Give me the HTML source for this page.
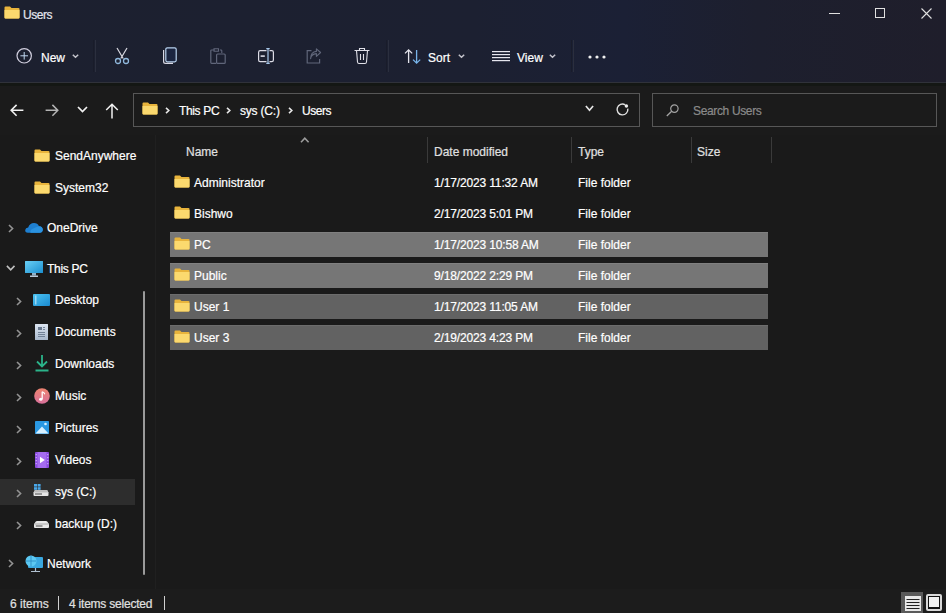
<!DOCTYPE html>
<html><head><meta charset="utf-8">
<style>
*{margin:0;padding:0;box-sizing:border-box}
html,body{width:946px;height:613px;overflow:hidden;background:#1a1a1a;font-family:"Liberation Sans",sans-serif;font-size:12px;color:#fff}
.a{position:absolute}
.t{position:absolute;white-space:nowrap;line-height:14px;transform:scaleY(1.08);transform-origin:0 11px;-webkit-text-stroke:0.2px currentColor}
#top{left:0;top:0;width:946px;height:82px;background:linear-gradient(90deg,#1c202f 0%,#1c2031 50%,#1b2035 66%,#1d1f2e 80%,#1f1e2b 100%)}
#topline{left:0;top:82px;width:946px;height:1px;background:#30323a}
#band{left:0;top:83px;width:946px;height:3px;background:#141714}
#addr{left:0;top:83px;width:946px;height:52px;background:#1b1b1b}
.sep{position:absolute;width:1px;background:#2b2f3e;box-shadow:-2px 0 0 #191c2a}
svg{position:absolute;overflow:visible}
.row{position:absolute;left:170px;width:598px;height:25px}
.sel1{background:#767676;box-shadow:inset 0 1px 0 #808080}
.sel2{background:#626262;box-shadow:inset 0 1px 0 #6c6c6c}
.nav{color:#fff}
</style></head><body>
<!-- title + toolbar -->
<div id="top" class="a"></div>
<div id="topline" class="a"></div>
<div id="addr" class="a"></div>
<div id="band" class="a"></div>

<!-- title folder icon -->
<svg style="left:4px;top:6px" width="16" height="13" viewBox="0 0 16 13">
 <path d="M0.5 1.5 Q0.5 0.5 1.5 0.5 H6 L7.5 2 H14.5 Q15.5 2 15.5 3 V11.5 Q15.5 12.5 14.5 12.5 H1.5 Q0.5 12.5 0.5 11.5Z" fill="#e8b43c"/>
 <path d="M0.5 4 H15.5 V11.5 Q15.5 12.5 14.5 12.5 H1.5 Q0.5 12.5 0.5 11.5Z" fill="#fbd96e"/>
</svg>
<div class="t" style="left:23px;top:7.5px;color:#e4e6ee;letter-spacing:-0.45px">Users</div>

<!-- window controls -->
<div class="a" style="left:829px;top:13px;width:11px;height:1px;background:#e0e0e0"></div>
<div class="a" style="left:875px;top:8px;width:10px;height:10px;border:1px solid #e0e0e0"></div>
<svg style="left:921px;top:8px" width="11" height="11" viewBox="0 0 11 11"><path d="M0.5 0.5 L10.5 10.5 M10.5 0.5 L0.5 10.5" stroke="#e0e0e0" stroke-width="1.1"/></svg>

<!-- toolbar -->
<svg style="left:16px;top:48px" width="16" height="16" viewBox="0 0 16 16"><circle cx="8.2" cy="7.8" r="7.2" fill="none" stroke="#d0cede" stroke-width="1.2"/><path d="M8.2 4 V11.6 M4.4 7.8 H12" stroke="#c0d8f0" stroke-width="1"/></svg>
<div class="t" style="left:41px;top:51px;color:#fff">New</div>
<svg style="left:72px;top:54px" width="7" height="4" viewBox="0 0 7 4"><path d="M0.8 0.8 L3.5 3.3 L6.2 0.8" fill="none" stroke="#c4c4cc" stroke-width="1.5"/></svg>
<div class="sep" style="left:95px;top:40px;height:32px"></div>

<!-- cut -->
<svg style="left:114px;top:48px" width="16" height="16" viewBox="0 0 16 16"><path d="M3 0 L9.2 10.5 M13 0 L6.8 10.5" stroke="#d8d8e0" stroke-width="1.2" fill="none"/><circle cx="4" cy="13" r="2.5" fill="none" stroke="#90b8dc" stroke-width="1.3"/><circle cx="12" cy="13" r="2.5" fill="none" stroke="#90b8dc" stroke-width="1.3"/></svg>
<!-- copy -->
<svg style="left:162px;top:47px" width="15" height="17" viewBox="0 0 15 17"><rect x="3.8" y="0.8" width="10.4" height="14" rx="1.5" fill="#1b2540" stroke="#b8d2ee" stroke-width="1.2"/><path d="M1.6 3 V14.5 Q1.6 16.4 3.5 16.4 H11" fill="none" stroke="#d8d8e4" stroke-width="1.2"/></svg>
<!-- paste (disabled) -->
<svg style="left:210px;top:48px" width="16" height="16" viewBox="0 0 16 16"><path d="M4.5 2 H1.6 Q0.8 2 0.8 2.8 V14.6 Q0.8 15.4 1.6 15.4 H6" fill="none" stroke="#60667a" stroke-width="1.2"/><path d="M4 0.8 H8.5 V3.2 H4Z" fill="none" stroke="#60667a" stroke-width="1.1"/><path d="M10 2 H11 Q11.8 2 11.8 2.8 V5" fill="none" stroke="#60667a" stroke-width="1.1"/><rect x="6.6" y="6" width="8.6" height="9.4" rx="1" fill="none" stroke="#60667a" stroke-width="1.2"/></svg>
<!-- rename -->
<svg style="left:258px;top:48px" width="16" height="16" viewBox="0 0 16 16"><path d="M8.5 2.6 H2.2 Q0.6 2.6 0.6 4.2 V12 Q0.6 13.6 2.2 13.6 H8.5 M11.5 2.6 H13.8 Q15.4 2.6 15.4 4.2 V12 Q15.4 13.6 13.8 13.6 H11.5" fill="none" stroke="#dcdce6" stroke-width="1.2"/><path d="M10 0.6 V15.4 M8.3 0.6 H11.7 M8.3 15.4 H11.7" stroke="#a8c8ea" stroke-width="1.2"/><path d="M2.6 8.1 H6.8" stroke="#dcdce6" stroke-width="1.6"/></svg>
<!-- share (disabled) -->
<svg style="left:306px;top:48px" width="16" height="16" viewBox="0 0 16 16"><path d="M5.5 2.6 H1.2 V15 H13.6 V11" fill="none" stroke="#60667a" stroke-width="1.2"/><path d="M4.6 10.6 Q5 6.2 10.4 5.6 V8.4 L14.6 4.5 L10.4 0.8 V3.4 Q4.8 3.8 4.6 10.6Z" fill="none" stroke="#60667a" stroke-width="1.1" stroke-linejoin="round"/></svg>
<!-- delete -->
<svg style="left:354px;top:48px" width="16" height="16" viewBox="0 0 16 16"><path d="M0.5 2.5 H15.5 M5.5 2.5 V0.5 H10.5 V2.5" fill="none" stroke="#e0e0e8" stroke-width="1.1"/><path d="M2.5 2.5 L3.5 14 Q3.7 15.5 5 15.5 H11 Q12.3 15.5 12.5 14 L13.5 2.5" fill="none" stroke="#e0e0e8" stroke-width="1.1"/><path d="M6.5 6 V12 M9.5 6 V12" stroke="#e0e0e8" stroke-width="1.1"/></svg>
<div class="sep" style="left:388px;top:40px;height:32px"></div>
<!-- sort -->
<svg style="left:404px;top:49px" width="18" height="15" viewBox="0 0 18 15"><path d="M4.6 0.8 V14 M1 4.4 L4.6 0.8 L8.2 4.4" fill="none" stroke="#e4e4ec" stroke-width="1.3"/><path d="M12.6 1 V14.2 M9 10.6 L12.6 14.2 L16.2 10.6" fill="none" stroke="#78b4ea" stroke-width="1.3"/></svg>
<div class="t" style="left:428px;top:51px">Sort</div>
<svg style="left:458px;top:54px" width="7" height="4" viewBox="0 0 7 4"><path d="M0.8 0.8 L3.5 3.3 L6.2 0.8" fill="none" stroke="#c4c4cc" stroke-width="1.5"/></svg>
<!-- view -->
<svg style="left:492px;top:51px" width="18" height="11" viewBox="0 0 18 11"><rect x="0" y="0" width="18" height="1.2" fill="#e6e6ee"/><rect x="0" y="3" width="18" height="1.2" fill="#e6e6ee"/><rect x="0" y="6" width="18" height="1.2" fill="#e6e6ee"/><rect x="0" y="9" width="18" height="1.2" fill="#e6e6ee"/></svg>
<div class="t" style="left:517px;top:51px">View</div>
<svg style="left:549px;top:54px" width="7" height="4" viewBox="0 0 7 4"><path d="M0.8 0.8 L3.5 3.3 L6.2 0.8" fill="none" stroke="#c4c4cc" stroke-width="1.5"/></svg>
<div class="sep" style="left:573px;top:40px;height:32px"></div>
<svg style="left:588px;top:54.5px" width="18" height="4" viewBox="0 0 18 4"><circle cx="2" cy="2" r="1.6" fill="#f0f0f0"/><circle cx="9" cy="2" r="1.6" fill="#f0f0f0"/><circle cx="16" cy="2" r="1.6" fill="#f0f0f0"/></svg>

<!-- nav arrows -->
<svg style="left:10px;top:104px" width="14" height="13" viewBox="0 0 14 13"><path d="M13.4 6.3 H1.2 M6.6 0.9 L1.2 6.3 L6.6 11.7" fill="none" stroke="#f2f2f2" stroke-width="1.6"/></svg>
<svg style="left:45px;top:104px" width="14" height="13" viewBox="0 0 14 13"><path d="M0.6 6.3 H12.8 M7.4 0.9 L12.8 6.3 L7.4 11.7" fill="none" stroke="#b4b4b4" stroke-width="1.5"/></svg>
<svg style="left:77px;top:106px" width="11" height="7" viewBox="0 0 11 7"><path d="M1 1 L5.5 5.5 L10 1" fill="none" stroke="#f2f2f2" stroke-width="1.7"/></svg>
<svg style="left:105px;top:103px" width="14" height="16" viewBox="0 0 14 16"><path d="M7 15.5 V1.4 M1.2 7 L7 1.2 L12.8 7" fill="none" stroke="#f2f2f2" stroke-width="1.5"/></svg>

<!-- address box -->
<div class="a" style="left:133px;top:93px;width:507px;height:34px;border:1px solid #575757;background:#1b1b1b"></div>
<svg style="left:142px;top:102px" width="16" height="13" viewBox="0 0 16 13">
 <path d="M0.5 1.5 Q0.5 0.5 1.5 0.5 H6 L7.5 2 H14.5 Q15.5 2 15.5 3 V11.5 Q15.5 12.5 14.5 12.5 H1.5 Q0.5 12.5 0.5 11.5Z" fill="#e8b43c"/>
 <path d="M0.5 4 H15.5 V11.5 Q15.5 12.5 14.5 12.5 H1.5 Q0.5 12.5 0.5 11.5Z" fill="#fbd96e"/>
</svg>
<svg style="left:164.5px;top:107px" width="5" height="7" viewBox="0 0 5 7"><path d="M1 0.9 L3.8 3.5 L1 6.1" fill="none" stroke="#e8e8e8" stroke-width="1.6"/></svg>
<div class="t" style="left:179px;top:104px;letter-spacing:-0.35px">This PC</div>
<svg style="left:226px;top:107px" width="5" height="7" viewBox="0 0 5 7"><path d="M1 0.9 L3.8 3.5 L1 6.1" fill="none" stroke="#e8e8e8" stroke-width="1.6"/></svg>
<div class="t" style="left:240px;top:104px;letter-spacing:-0.2px">sys (C:)</div>
<svg style="left:288px;top:107px" width="5" height="7" viewBox="0 0 5 7"><path d="M1 0.9 L3.8 3.5 L1 6.1" fill="none" stroke="#e8e8e8" stroke-width="1.6"/></svg>
<div class="t" style="left:302px;top:104px;letter-spacing:-0.45px">Users</div>
<svg style="left:584.5px;top:105px" width="9" height="7" viewBox="0 0 9 7"><path d="M0.9 1 L4.5 5.2 L8.1 1" fill="none" stroke="#e6e6e6" stroke-width="1.7"/></svg>
<svg style="left:616px;top:103px" width="13" height="13" viewBox="0 0 13 13"><path d="M9.2 1.8 A5.4 5.4 0 1 0 11.8 5.6" fill="none" stroke="#e0e0e0" stroke-width="1.4"/><circle cx="10.4" cy="3" r="1.7" fill="#eeeeee"/></svg>

<!-- search box -->
<div class="a" style="left:652px;top:93px;width:285px;height:34px;border:1px solid #575757;background:#1b1b1b"></div>
<svg style="left:666px;top:104px" width="14" height="13" viewBox="0 0 14 13"><circle cx="8.4" cy="4.6" r="3.7" fill="none" stroke="#a4a4a4" stroke-width="1.2"/><path d="M5.7 7.3 L0.8 12" stroke="#a4a4a4" stroke-width="1.3"/></svg>
<div class="t" style="left:693px;top:104px;color:#8a8a8a;letter-spacing:-0.35px">Search Users</div>

<!-- nav pane -->
<div class="a" style="left:155px;top:135px;width:1px;height:460px;background:#202020"></div>
<div class="a" style="left:143px;top:291px;width:2px;height:284px;background:#9a9a9a;border-radius:1px"></div>

<svg style="left:34px;top:149px" width="16" height="13" viewBox="0 0 16 13">
 <path d="M0.5 1.5 Q0.5 0.5 1.5 0.5 H6 L7.5 2 H14.5 Q15.5 2 15.5 3 V11.5 Q15.5 12.5 14.5 12.5 H1.5 Q0.5 12.5 0.5 11.5Z" fill="#e8b43c"/>
 <path d="M0.5 4 H15.5 V11.5 Q15.5 12.5 14.5 12.5 H1.5 Q0.5 12.5 0.5 11.5Z" fill="#fbd96e"/>
</svg>
<div class="t" style="left:55px;top:149px">SendAnywhere</div>
<svg style="left:34px;top:181px" width="16" height="13" viewBox="0 0 16 13">
 <path d="M0.5 1.5 Q0.5 0.5 1.5 0.5 H6 L7.5 2 H14.5 Q15.5 2 15.5 3 V11.5 Q15.5 12.5 14.5 12.5 H1.5 Q0.5 12.5 0.5 11.5Z" fill="#e8b43c"/>
 <path d="M0.5 4 H15.5 V11.5 Q15.5 12.5 14.5 12.5 H1.5 Q0.5 12.5 0.5 11.5Z" fill="#fbd96e"/>
</svg>
<div class="t" style="left:55px;top:181px">System32</div>

<!-- OneDrive -->
<svg style="left:8px;top:224px" width="6" height="9" viewBox="0 0 6 9"><path d="M1 1 L4.6 4.5 L1 8" fill="none" stroke="#939393" stroke-width="1.6"/></svg>
<svg style="left:25px;top:222px" width="18" height="11" viewBox="0 0 18 11"><path d="M2.8 10.8 Q0 10.8 0.2 8 Q0.5 5.6 3.2 5.4 Q4.6 1.2 9 1 Q12.6 1 14 4.2 Q17.8 4.6 17.8 7.8 Q17.6 10.8 14.6 10.8Z" fill="#1e7fd0"/><path d="M5.5 10.8 Q4.8 7.6 8.2 6.4 Q11 5.2 14 4.2 Q17.8 4.6 17.8 7.8 Q17.6 10.8 14.6 10.8Z" fill="#2a92e0"/></svg>
<div class="t" style="left:47px;top:221px">OneDrive</div>

<!-- This PC -->
<svg style="left:6px;top:265px" width="10" height="6" viewBox="0 0 10 6"><path d="M0.9 0.9 L4.7 4.8 L8.5 0.9" fill="none" stroke="#c0c0c0" stroke-width="1.6"/></svg>
<svg style="left:25px;top:261px" width="18" height="16" viewBox="0 0 18 16"><rect x="0" y="0" width="18" height="12" rx="1" fill="#3fb8e8"/><rect x="0" y="0" width="18" height="12" rx="1" fill="url(#pcg)"/><rect x="7" y="12" width="4" height="2.5" fill="#8fb0c8"/><rect x="5" y="14.5" width="8" height="1.5" fill="#b8c8d8"/><defs><linearGradient id="pcg" x1="0" y1="0" x2="1" y2="1"><stop offset="0" stop-color="#6ad0f5"/><stop offset="1" stop-color="#1b8fd0"/></linearGradient></defs></svg>
<div class="t" style="left:47px;top:262px;letter-spacing:-0.3px">This PC</div>

<!-- sub items -->
<svg style="left:16px;top:297px" width="6" height="9" viewBox="0 0 6 9"><path d="M1 1 L4.6 4.5 L1 8" fill="none" stroke="#939393" stroke-width="1.6"/></svg>
<svg style="left:33px;top:294px" width="17" height="12" viewBox="0 0 17 12"><defs><linearGradient id="dg" x1="0" y1="0" x2="1" y2="1"><stop offset="0" stop-color="#4cc4f2"/><stop offset="1" stop-color="#1a8ad0"/></linearGradient></defs><rect x="0" y="0" width="17" height="12" rx="1" fill="url(#dg)"/><rect x="2.2" y="1.5" width="1.2" height="9" fill="#bfe8fb" opacity="0.85"/></svg>
<div class="t" style="left:55px;top:293px">Desktop</div>

<svg style="left:16px;top:329px" width="6" height="9" viewBox="0 0 6 9"><path d="M1 1 L4.6 4.5 L1 8" fill="none" stroke="#939393" stroke-width="1.6"/></svg>
<svg style="left:35px;top:324px" width="13" height="16" viewBox="0 0 13 16"><rect x="0" y="0" width="13" height="16" rx="1" fill="#c8d4e4"/><rect x="0" y="0" width="13" height="16" rx="1" fill="url(#docg)"/><rect x="3" y="3" width="4" height="3" fill="#6a7a90"/><path d="M3 8.5 H10 M3 10.5 H10 M3 12.5 H10 M8 3.5 H10 M8 5.5 H10" stroke="#6a7a90" stroke-width="0.9"/><defs><linearGradient id="docg" x1="0" y1="0" x2="0" y2="1"><stop offset="0" stop-color="#dde6f2"/><stop offset="1" stop-color="#a8b8cc"/></linearGradient></defs></svg>
<div class="t" style="left:55px;top:325px">Documents</div>

<svg style="left:16px;top:361px" width="6" height="9" viewBox="0 0 6 9"><path d="M1 1 L4.6 4.5 L1 8" fill="none" stroke="#939393" stroke-width="1.6"/></svg>
<svg style="left:35px;top:355px" width="14" height="17" viewBox="0 0 14 17"><path d="M7 0 V11 M2 6.5 L7 11.5 L12 6.5" fill="none" stroke="#2bb38a" stroke-width="1.8"/><rect x="0.5" y="14.5" width="13" height="2" fill="#2bb38a"/></svg>
<div class="t" style="left:55px;top:357px">Downloads</div>

<svg style="left:16px;top:393px" width="6" height="9" viewBox="0 0 6 9"><path d="M1 1 L4.6 4.5 L1 8" fill="none" stroke="#939393" stroke-width="1.6"/></svg>
<svg style="left:34px;top:388px" width="16" height="16" viewBox="0 0 16 16"><defs><linearGradient id="mg" x1="0" y1="0" x2="0" y2="1"><stop offset="0" stop-color="#ee8470"/><stop offset="1" stop-color="#d8709a"/></linearGradient></defs><circle cx="8" cy="8" r="7.8" fill="url(#mg)"/><path d="M8.2 3.8 V11" stroke="#fff" stroke-width="1.3"/><ellipse cx="6.8" cy="11.2" rx="1.7" ry="1.5" fill="#fff"/><path d="M8.2 3.8 Q10.2 4.4 10.8 6.2" fill="none" stroke="#fff" stroke-width="1.2"/></svg>
<div class="t" style="left:55px;top:389px">Music</div>

<svg style="left:16px;top:425px" width="6" height="9" viewBox="0 0 6 9"><path d="M1 1 L4.6 4.5 L1 8" fill="none" stroke="#939393" stroke-width="1.6"/></svg>
<svg style="left:35px;top:421px" width="14" height="13" viewBox="0 0 14 13"><rect x="0" y="0" width="14" height="13" rx="0.8" fill="#2a98e2"/><path d="M0.5 12.5 L7 5.5 L13.5 12.5Z" fill="#d8f0ff"/><circle cx="10.5" cy="3" r="1.3" fill="#d8f0ff"/></svg>
<div class="t" style="left:55px;top:421px">Pictures</div>

<svg style="left:16px;top:457px" width="6" height="9" viewBox="0 0 6 9"><path d="M1 1 L4.6 4.5 L1 8" fill="none" stroke="#939393" stroke-width="1.6"/></svg>
<svg style="left:35px;top:452px" width="14" height="16" viewBox="0 0 14 16"><rect x="0" y="0" width="14" height="16" rx="1" fill="#8a4be0"/><rect x="2.5" y="0" width="9" height="16" fill="#a56cf0"/><path d="M1.2 2 V3.2 M1.2 5 V6.2 M1.2 8 V9.2 M1.2 11 V12.2 M12.8 2 V3.2 M12.8 5 V6.2 M12.8 8 V9.2 M12.8 11 V12.2" stroke="#d8c0ff" stroke-width="1"/><path d="M5 4.8 L9.8 8 L5 11.2Z" fill="#fff"/></svg>
<div class="t" style="left:55px;top:453px">Videos</div>

<!-- sys C selected -->
<div class="a" style="left:0;top:479px;width:135px;height:26px;background:#2d2d2d"></div>
<svg style="left:16px;top:489px" width="6" height="9" viewBox="0 0 6 9"><path d="M1 1 L4.6 4.5 L1 8" fill="none" stroke="#939393" stroke-width="1.6"/></svg>
<svg style="left:33px;top:484px" width="16" height="12" viewBox="0 0 16 12"><path d="M0.5 8.5 L2 6 H14 L15.5 8.5 V11 Q15.5 12 14.5 12 H1.5 Q0.5 12 0.5 11Z" fill="#e6e6e6"/><path d="M2 6 H14 L15.5 8.5 H0.5Z" fill="#bdbdbd"/><path d="M2 10 H9" stroke="#4a4a4a" stroke-width="1"/><rect x="1" y="0" width="3" height="2.6" fill="#4aa8ea"/><rect x="4.6" y="0" width="3" height="2.6" fill="#4aa8ea"/><rect x="1" y="3.2" width="3" height="2.6" fill="#4aa8ea"/><rect x="4.6" y="3.2" width="3" height="2.6" fill="#4aa8ea"/></svg>
<div class="t" style="left:55px;top:485px">sys (C:)</div>

<svg style="left:16px;top:521px" width="6" height="9" viewBox="0 0 6 9"><path d="M1 1 L4.6 4.5 L1 8" fill="none" stroke="#939393" stroke-width="1.6"/></svg>
<svg style="left:34px;top:521px" width="15" height="7" viewBox="0 0 15 7"><path d="M0 3 L1.8 0.5 Q2.2 0 3 0 H12 Q12.8 0 13.2 0.5 L15 3 V6 Q15 7 14 7 H1 Q0 7 0 6Z" fill="#e8e8e8"/><path d="M0.3 3 H14.7" stroke="#9a9a9a" stroke-width="0.8"/><path d="M1.8 5 H8.5" stroke="#4a4a4a" stroke-width="1"/></svg>
<div class="t" style="left:55px;top:517px">backup (D:)</div>

<!-- Network -->
<svg style="left:8px;top:559px" width="6" height="9" viewBox="0 0 6 9"><path d="M1 1 L4.6 4.5 L1 8" fill="none" stroke="#939393" stroke-width="1.6"/></svg>
<svg style="left:25px;top:555px" width="18" height="18" viewBox="0 0 18 18"><rect x="3" y="2" width="15" height="11" rx="1" fill="#3aa8e0"/><circle cx="6" cy="6" r="5.5" fill="#5cc8f2"/><path d="M1 6 H11 M6 0.5 V11.5" stroke="#2a88c0" stroke-width="0.8"/><path d="M10.5 13 V16 M6 16.5 H15" stroke="#b0c0d0" stroke-width="1.2"/></svg>
<div class="t" style="left:47px;top:557px">Network</div>

<!-- status bar -->
<div class="a" style="left:0;top:589px;width:946px;height:24px;background:#1c1c1c"></div>
<div class="t" style="left:10px;top:597px;color:#e0e0e0">6 items</div>
<div class="a" style="left:58px;top:596px;width:1px;height:14px;background:#d0d0d0"></div>
<div class="t" style="left:69px;top:597px;color:#e0e0e0;letter-spacing:-0.22px">4 items selected</div>
<div class="a" style="left:164px;top:596px;width:1px;height:14px;background:#d0d0d0"></div>

<!-- view buttons -->
<div class="a" style="left:901px;top:592px;width:22px;height:21px;background:#5a5a5a"></div>
<div class="a" style="left:905px;top:596px;width:16px;height:15px;background:#e8e8e8"></div>
<svg style="left:905px;top:598px" width="16" height="12" viewBox="0 0 16 12"><rect x="1.5" y="1" width="13" height="1" fill="#222"/><rect x="1.5" y="4" width="13" height="1" fill="#222"/><rect x="1.5" y="7" width="13" height="1" fill="#222"/><rect x="1.5" y="10" width="13" height="1" fill="#222"/></svg>
<div class="a" style="left:926px;top:594px;width:16px;height:17px;border:2px solid #d8d8d8;border-radius:2px;background:#111"></div>
<div class="a" style="left:929px;top:597px;width:10px;height:10px;background:#f0f0f0"></div>

<!-- content headers -->
<svg style="left:299.5px;top:137px" width="10" height="6" viewBox="0 0 10 6"><path d="M1 5.2 L4.8 1.2 L8.6 5.2" fill="none" stroke="#9c9c9c" stroke-width="1.6"/></svg>
<div class="t" style="left:186px;top:145px;color:#e0e0e0">Name</div>
<div class="a" style="left:427px;top:137px;width:1px;height:26px;background:#3a3a3a"></div>
<div class="t" style="left:434px;top:145px;color:#e0e0e0">Date modified</div>
<div class="a" style="left:571px;top:137px;width:1px;height:26px;background:#3a3a3a"></div>
<div class="t" style="left:578px;top:145px;color:#e0e0e0">Type</div>
<div class="a" style="left:691px;top:137px;width:1px;height:26px;background:#3a3a3a"></div>
<div class="t" style="left:697px;top:145px;color:#e0e0e0">Size</div>
<div class="a" style="left:771px;top:137px;width:1px;height:26px;background:#3a3a3a"></div>

<!-- rows -->
<div class="row" style="top:170px"><svg style="left:4px;top:5px" width="16" height="13" viewBox="0 0 16 13"><path d="M0.5 1.5 Q0.5 0.5 1.5 0.5 H6 L7.5 2 H14.5 Q15.5 2 15.5 3 V11.5 Q15.5 12.5 14.5 12.5 H1.5 Q0.5 12.5 0.5 11.5Z" fill="#e8b43c"/><path d="M0.5 4 H15.5 V11.5 Q15.5 12.5 14.5 12.5 H1.5 Q0.5 12.5 0.5 11.5Z" fill="#fbd96e"/></svg><div class="t" style="left:24px;top:6px">Administrator</div><div class="t" style="left:264px;top:6px;letter-spacing:-0.15px">1/17/2023 11:32 AM</div><div class="t" style="left:408px;top:6px">File folder</div></div>
<div class="row" style="top:201px"><svg style="left:4px;top:5px" width="16" height="13" viewBox="0 0 16 13"><path d="M0.5 1.5 Q0.5 0.5 1.5 0.5 H6 L7.5 2 H14.5 Q15.5 2 15.5 3 V11.5 Q15.5 12.5 14.5 12.5 H1.5 Q0.5 12.5 0.5 11.5Z" fill="#e8b43c"/><path d="M0.5 4 H15.5 V11.5 Q15.5 12.5 14.5 12.5 H1.5 Q0.5 12.5 0.5 11.5Z" fill="#fbd96e"/></svg><div class="t" style="left:24px;top:6px">Bishwo</div><div class="t" style="left:264px;top:6px;letter-spacing:-0.15px">2/17/2023 5:01 PM</div><div class="t" style="left:408px;top:6px">File folder</div></div>
<div class="row sel1" style="top:232px"><svg style="left:4px;top:5px" width="16" height="13" viewBox="0 0 16 13"><path d="M0.5 1.5 Q0.5 0.5 1.5 0.5 H6 L7.5 2 H14.5 Q15.5 2 15.5 3 V11.5 Q15.5 12.5 14.5 12.5 H1.5 Q0.5 12.5 0.5 11.5Z" fill="#e8b43c"/><path d="M0.5 4 H15.5 V11.5 Q15.5 12.5 14.5 12.5 H1.5 Q0.5 12.5 0.5 11.5Z" fill="#fbd96e"/></svg><div class="t" style="left:24px;top:6px">PC</div><div class="t" style="left:264px;top:6px;letter-spacing:-0.15px">1/17/2023 10:58 AM</div><div class="t" style="left:408px;top:6px">File folder</div></div>
<div class="row sel1" style="top:263px"><svg style="left:4px;top:5px" width="16" height="13" viewBox="0 0 16 13"><path d="M0.5 1.5 Q0.5 0.5 1.5 0.5 H6 L7.5 2 H14.5 Q15.5 2 15.5 3 V11.5 Q15.5 12.5 14.5 12.5 H1.5 Q0.5 12.5 0.5 11.5Z" fill="#e8b43c"/><path d="M0.5 4 H15.5 V11.5 Q15.5 12.5 14.5 12.5 H1.5 Q0.5 12.5 0.5 11.5Z" fill="#fbd96e"/></svg><div class="t" style="left:24px;top:6px">Public</div><div class="t" style="left:264px;top:6px;letter-spacing:-0.15px">9/18/2022 2:29 PM</div><div class="t" style="left:408px;top:6px">File folder</div></div>
<div class="row sel2" style="top:294px"><svg style="left:4px;top:5px" width="16" height="13" viewBox="0 0 16 13"><path d="M0.5 1.5 Q0.5 0.5 1.5 0.5 H6 L7.5 2 H14.5 Q15.5 2 15.5 3 V11.5 Q15.5 12.5 14.5 12.5 H1.5 Q0.5 12.5 0.5 11.5Z" fill="#e8b43c"/><path d="M0.5 4 H15.5 V11.5 Q15.5 12.5 14.5 12.5 H1.5 Q0.5 12.5 0.5 11.5Z" fill="#fbd96e"/></svg><div class="t" style="left:24px;top:6px">User 1</div><div class="t" style="left:264px;top:6px;letter-spacing:-0.15px">1/17/2023 11:05 AM</div><div class="t" style="left:408px;top:6px">File folder</div></div>
<div class="row sel2" style="top:325px"><svg style="left:4px;top:5px" width="16" height="13" viewBox="0 0 16 13"><path d="M0.5 1.5 Q0.5 0.5 1.5 0.5 H6 L7.5 2 H14.5 Q15.5 2 15.5 3 V11.5 Q15.5 12.5 14.5 12.5 H1.5 Q0.5 12.5 0.5 11.5Z" fill="#e8b43c"/><path d="M0.5 4 H15.5 V11.5 Q15.5 12.5 14.5 12.5 H1.5 Q0.5 12.5 0.5 11.5Z" fill="#fbd96e"/></svg><div class="t" style="left:24px;top:6px">User 3</div><div class="t" style="left:264px;top:6px;letter-spacing:-0.15px">2/19/2023 4:23 PM</div><div class="t" style="left:408px;top:6px">File folder</div></div>
</body></html>
